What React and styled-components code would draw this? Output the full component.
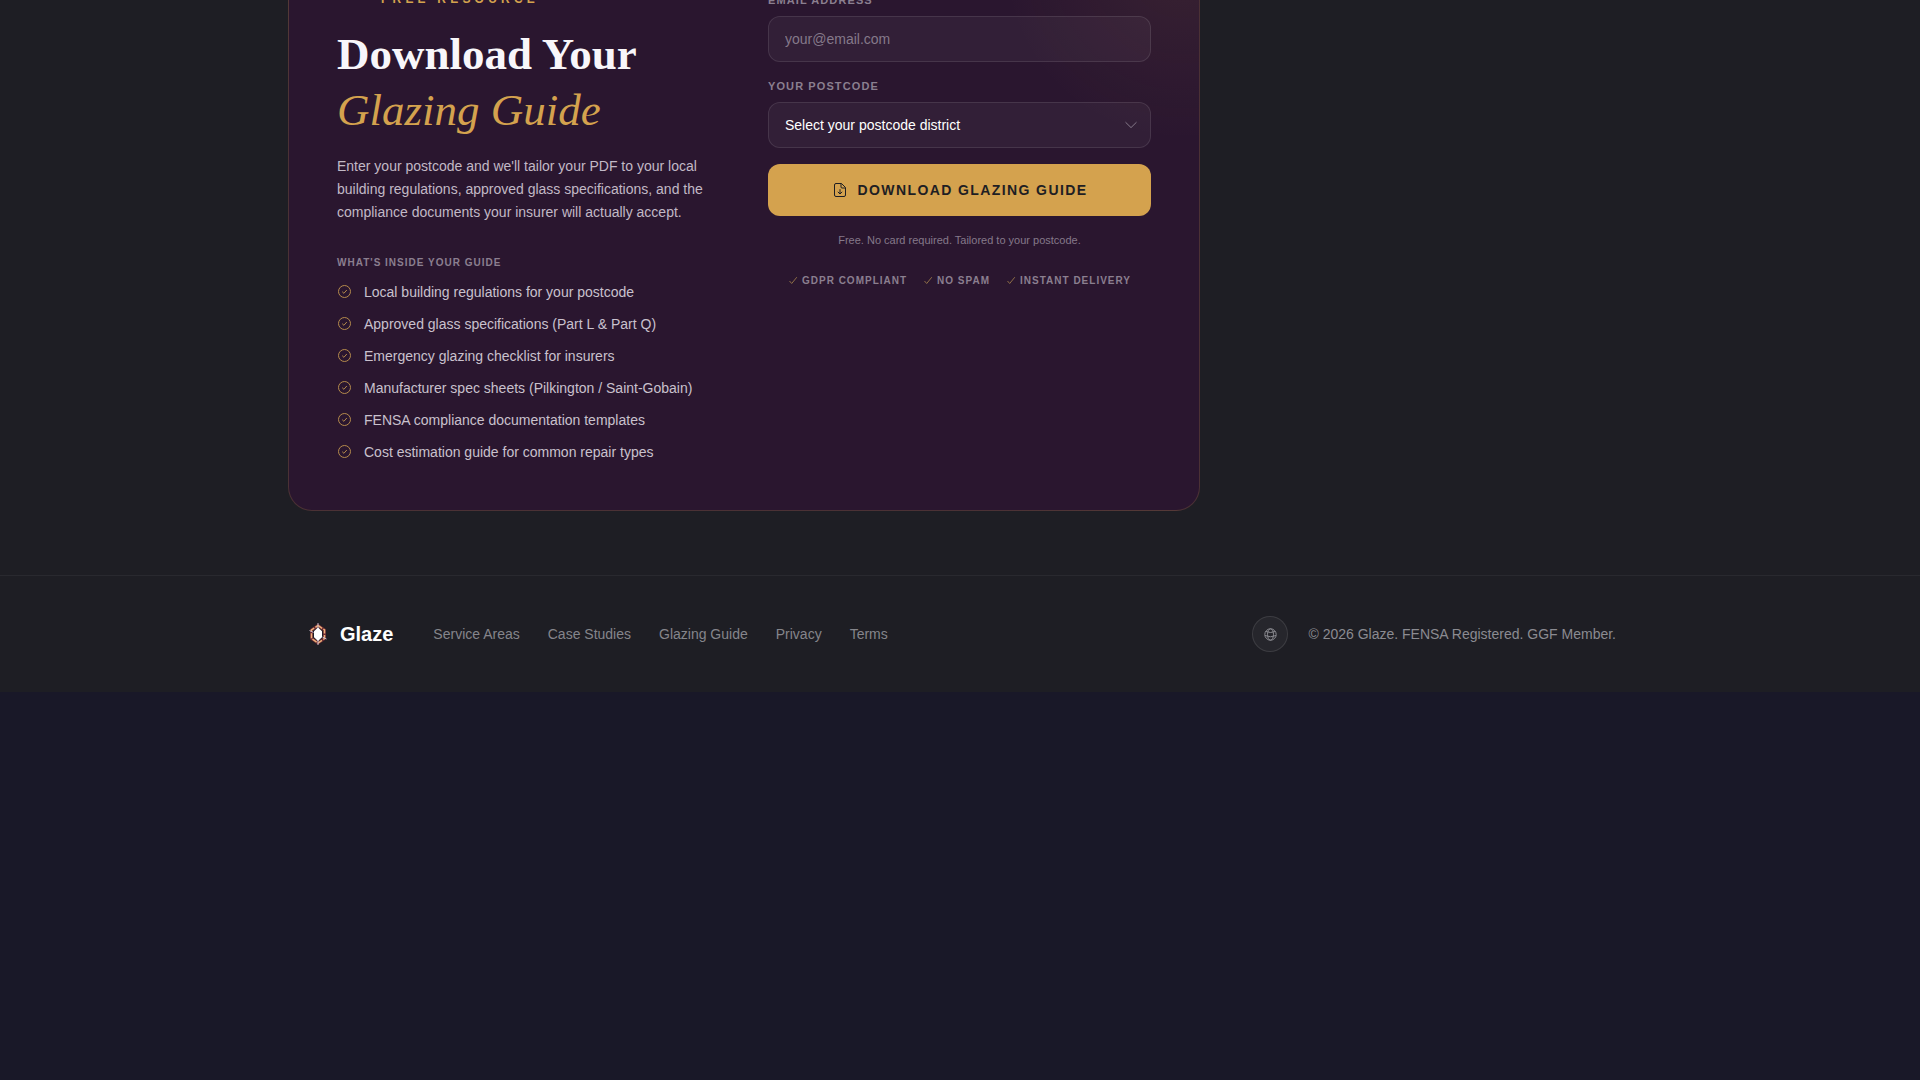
import React from "react";
import styled, { createGlobalStyle } from "styled-components";

const gold = "#d4a24e";
const sans = '"Liberation Sans", Arial, sans-serif';
const serif = '"Liberation Serif", "Times New Roman", serif';

const GlobalStyle = createGlobalStyle`
  *, *::before, *::after { box-sizing: border-box; }
  body { margin: 0; background: #191828; color: #fff; font-family: ${sans}; overflow-x: hidden; }
  h2, p, ul { margin: 0; padding: 0; }
  ul { list-style: none; }
`;

const Page = styled.div`
  background: #1e1e24;
  overflow: hidden;
`;

const Section = styled.main`
  max-width: 1344px;
  margin: 0 auto;
  padding-bottom: 64px;
`;

const Card = styled.section`
  display: grid;
  grid-template-columns: 1fr 1fr;
  gap: 48px;
  max-width: 912px;
  margin-top: -57px;
  padding: 48px;
  border: 1px solid rgba(212, 162, 78, 0.2);
  border-radius: 24px;
  background:
    radial-gradient(circle at calc(100% - 16px) 16px, rgba(212, 162, 78, 0.08), transparent 180px),
    #2a162f;
`;

const Eyebrow = styled.p`
  display: flex;
  align-items: center;
  gap: 12px;
  color: ${gold};
  font-size: 12px;
  line-height: 14px;
  font-weight: 700;
  letter-spacing: 0.35em;
  text-transform: uppercase;
  &::before { content: ""; width: 32px; height: 1px; background: ${gold}; }
`;

const Title = styled.h2`
  margin-top: 20px;
  font-family: ${serif};
  font-size: 45px;
  line-height: 56px;
  font-weight: 700;
  color: #f8f6fa;
`;

const Accent = styled.em`
  display: block;
  font-weight: 400;
  color: ${gold};
`;

const Intro = styled.p`
  margin-top: 17px;
  font-size: 14px;
  line-height: 23px;
  color: #c2b9c6;
`;

const ListTitle = styled.p`
  margin-top: 31px;
  font-size: 10px;
  line-height: 16px;
  font-weight: 700;
  letter-spacing: 0.1em;
  text-transform: uppercase;
  color: #8b7f8f;
`;

const List = styled.ul`
  display: grid;
  gap: 12px;
  margin-top: 11px;
`;

const Item = styled.li`
  display: flex;
  align-items: center;
  gap: 12px;
  font-size: 14px;
  line-height: 20px;
  color: #c9c1cd;
`;

const Form = styled.form`
  display: flex;
  flex-direction: column;
  gap: 16px;
`;

const Field = styled.div`
  display: grid;
  gap: 8px;
`;

const Label = styled.label`
  font-size: 11px;
  line-height: 16px;
  font-weight: 700;
  letter-spacing: 0.1em;
  text-transform: uppercase;
  color: #8b7f8f;
`;

const controlStyle = `
  width: 100%;
  height: 46px;
  padding: 0 16px;
  border: 1px solid rgba(255, 255, 255, 0.1);
  border-radius: 12px;
  background: rgba(255, 255, 255, 0.04);
  color: #fff;
  font-family: ${sans};
  font-size: 14px;
`;

const Input = styled.input`
  ${controlStyle}
  &::placeholder { color: #85798a; opacity: 1; }
`;

const SelectBox = styled.div`
  display: grid;
  align-items: center;
  > * { grid-area: 1 / 1; }
  > svg { justify-self: end; margin-right: 13px; pointer-events: none; }
`;

const Select = styled.select`
  ${controlStyle}
  appearance: none;
  option { color: #1e1e23; }
`;

const Submit = styled.button`
  display: flex;
  align-items: center;
  justify-content: center;
  gap: 10px;
  height: 52px;
  border: 0;
  border-radius: 12px;
  background: ${gold};
  color: #1e1e23;
  font-family: ${sans};
  font-size: 14px;
  font-weight: 700;
  letter-spacing: 0.1em;
  text-transform: uppercase;
`;

const Note = styled.p`
  font-size: 11px;
  line-height: 16px;
  text-align: center;
  color: #85798a;
`;

const Trust = styled.ul`
  display: flex;
  justify-content: center;
  gap: 16px;
  margin-top: 8px;
`;

const TrustItem = styled.li`
  display: flex;
  align-items: center;
  gap: 4px;
  font-size: 10px;
  line-height: 18px;
  font-weight: 700;
  letter-spacing: 0.1em;
  text-transform: uppercase;
  color: #8b7f8f;
`;

const Footer = styled.footer`
  padding: 40px 0;
  border-top: 1px solid rgba(255, 255, 255, 0.05);
`;

const FooterRow = styled.div`
  display: flex;
  align-items: center;
  justify-content: space-between;
  max-width: 1312px;
  margin: 0 auto;
`;

const FooterGroup = styled.div`
  display: flex;
  align-items: center;
  gap: ${(p) => p.$gap}px;
`;

const Brand = styled.a`
  display: flex;
  align-items: center;
  gap: 8px;
  color: #fff;
  font-size: 20px;
  line-height: 28px;
  font-weight: 700;
  text-decoration: none;
`;

const Nav = styled.nav`
  display: flex;
  gap: 28px;
`;

const NavLink = styled.a`
  font-size: 14px;
  line-height: 20px;
  color: #85858b;
  text-decoration: none;
`;

const Round = styled.a`
  display: grid;
  place-items: center;
  width: 36px;
  height: 36px;
  border: 1px solid rgba(255, 255, 255, 0.1);
  border-radius: 50%;
  background: rgba(255, 255, 255, 0.04);
  color: #8b8b91;
`;

const Copyright = styled.p`
  font-size: 14px;
  line-height: 20px;
  color: #8b8b91;
`;

const CircleCheck = () => (
  <svg width="15" height="15" viewBox="0 0 15 15" fill="none" stroke="#b48a4c" aria-hidden="true">
    <circle cx="7.5" cy="6.5" r="6" />
    <path d="M5.200 6.700l1.700 1.600L9.800 5" />
  </svg>
);

const Check = () => (
  <svg width="10" height="10" viewBox="0 0 10 10" fill="none" stroke="#98774a" strokeWidth="0.9" aria-hidden="true">
    <path d="M1.500 5l2.200 2.500L8.800 1.200" />
  </svg>
);

const Chevron = () => (
  <svg width="14" height="14" viewBox="0 0 14 14" fill="none" stroke="#85798a" aria-hidden="true">
    <path d="M1.500 4.200L7 9.600l5.500-5.400" />
  </svg>
);

const FileDown = () => (
  <svg width="16" height="16" viewBox="0 0 16 16" fill="none" stroke="currentColor" aria-hidden="true">
    <path d="M4 1.500h5.500L13.500 5.500v7.500q0 1.500-1.500 1.500h-8q-1.500 0-1.500-1.500v-10q0-1.500 1.500-1.500z" />
    <path d="M9 1.500v3.500q0 1 1 1h3.500M8 7.200v4.600M5.800 9.800L8 12l2.200-2.200" />
  </svg>
);

const Globe = () => (
  <svg width="14" height="14" viewBox="0 0 14 14" fill="none" stroke="currentColor" aria-hidden="true">
    <circle cx="7.500" cy="7.500" r="5.700" />
    <ellipse cx="7.500" cy="7.500" rx="3" ry="5.700" />
    <path d="M2.700 4.500q4.800 2 9.600 0M1.900 8.500q5.600 2.600 11.200 0" />
  </svg>
);

const Logo = () => (
  <svg width="28" height="28" viewBox="0 0 28 28" fill="none" aria-hidden="true">
    <path d="M14 5.500l6.500 4.500v8.500L14 23l-6.500-4.500V10z" stroke="#6a2a34" strokeWidth="3" />
    <path d="M14 5.500l6.500 4.500v8.500L14 23l-6.500-4.500V10z" stroke="#eeb078" strokeWidth="1.500" strokeDasharray="5 1.500" />
    <path d="M14 3v6M14 20v5M5.500 10.500l4 2M18.500 17l4 2" stroke="#c4b4c6" />
    <path d="M14 7.500l4 3.700v6L14 21l-4-3.800v-6z" fill="#fff" />
  </svg>
);

const contents = [
  "Local building regulations for your postcode",
  "Approved glass specifications (Part L & Part Q)",
  "Emergency glazing checklist for insurers",
  "Manufacturer spec sheets (Pilkington / Saint-Gobain)",
  "FENSA compliance documentation templates",
  "Cost estimation guide for common repair types",
];
const promises = ["GDPR Compliant", "No Spam", "Instant Delivery"];
const links = ["Service Areas", "Case Studies", "Glazing Guide", "Privacy", "Terms"];

export default function App() {
  return (
    <Page>
      <GlobalStyle />
      <Section>
        <Card>
          <div>
            <Eyebrow>Free Resource</Eyebrow>
            <Title>Download Your <Accent>Glazing Guide</Accent></Title>
            <Intro>
              Enter your postcode and we'll tailor your PDF to your local building regulations,
              approved glass specifications, and the compliance documents your insurer will
              actually accept.
            </Intro>
            <ListTitle>What's inside your guide</ListTitle>
            <List>
              {contents.map((text) => <Item key={text}><CircleCheck />{text}</Item>)}
            </List>
          </div>
          <Form onSubmit={(e) => e.preventDefault()}>
            <Field>
              <Label htmlFor="email">Email address</Label>
              <Input id="email" type="email" placeholder="your@email.com" />
            </Field>
            <Field>
              <Label htmlFor="postcode">Your postcode</Label>
              <SelectBox>
                <Select id="postcode" defaultValue="">
                  <option value="">Select your postcode district</option>
                </Select>
                <Chevron />
              </SelectBox>
            </Field>
            <Submit type="submit"><FileDown />Download Glazing Guide</Submit>
            <Note>Free. No card required. Tailored to your postcode.</Note>
            <Trust>
              {promises.map((text) => <TrustItem key={text}><Check />{text}</TrustItem>)}
            </Trust>
          </Form>
        </Card>
      </Section>
      <Footer>
        <FooterRow>
          <FooterGroup $gap={40}>
            <Brand href="#"><Logo />Glaze</Brand>
            <Nav>{links.map((text) => <NavLink key={text} href="#">{text}</NavLink>)}</Nav>
          </FooterGroup>
          <FooterGroup $gap={20}>
            <Round href="#" aria-label="Website"><Globe /></Round>
            <Copyright>© 2026 Glaze. FENSA Registered. GGF Member.</Copyright>
          </FooterGroup>
        </FooterRow>
      </Footer>
    </Page>
  );
}
